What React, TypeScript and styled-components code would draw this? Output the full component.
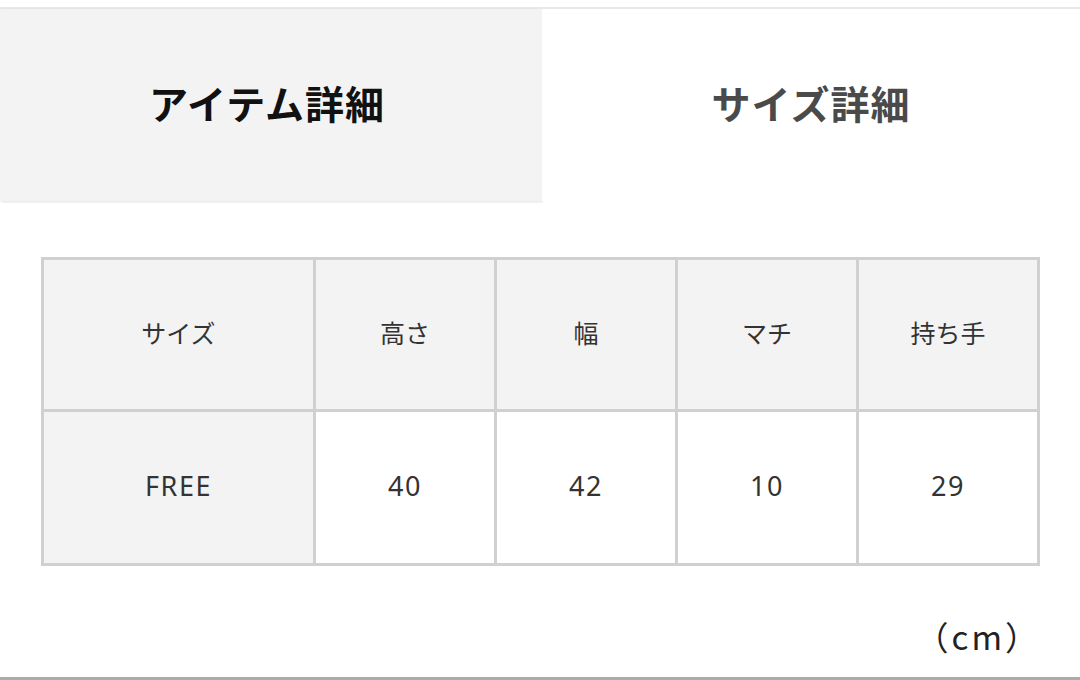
import { FC } from "react"
import styled, { createGlobalStyle } from "styled-components"

const GlobalStyle = createGlobalStyle`
  html, body {
    margin: 0;
    padding: 0;
    background: #fff;
  }
  body {
    font-family: "Noto Sans CJK JP", "Noto Sans", sans-serif;
    color: #333;
  }
`

const Page = styled.div`
  width: 1080px;
  height: 680px;
  box-sizing: border-box;
  padding-top: 7px;
  display: flex;
  flex-direction: column;
  border-bottom: 3px solid #ababab;
  overflow: hidden;
`

const TabBar = styled.div`
  display: grid;
  grid-template-columns: 542px 1fr;
  height: 194px;
  border-top: 2px solid #e8e8e8;
`

const Tab = styled.div<{ $active: boolean }>`
  display: flex;
  align-items: center;
  justify-content: center;
  box-sizing: border-box;
  padding-bottom: 6px;
  padding-right: ${({ $active }) => ($active ? "8px" : "0")};
  font-size: 39px;
  font-weight: 700;
  letter-spacing: 1px;
  color: ${({ $active }) => ($active ? "#111" : "#4a4a4a")};
  background: ${({ $active }) => ($active ? "#f3f3f3" : "#fff")};
  box-shadow: ${({ $active }) =>
    $active ? "1px 1px 2px rgba(0, 0, 0, 0.12)" : "none"};
  height: 192px;
`

const Content = styled.div`
  padding: 54px 41px 0 41px;
  display: flex;
  flex-direction: column;
`

const Table = styled.table`
  width: 996px;
  border-collapse: collapse;
  table-layout: fixed;
`

const Cell = styled.td<{ $shaded: boolean }>`
  border: 3px solid #d0d0d0;
  background: ${({ $shaded }) => ($shaded ? "#f3f3f3" : "#fff")};
  text-align: center;
  vertical-align: middle;
  font-size: 25px;
  color: #333;
  padding: 0 0 5px 0;
`

const HeaderRow = styled.tr`
  height: 152px;
`

const DataRow = styled.tr`
  height: 154px;
`

const Number = styled.span`
  font-family: "Noto Sans", "Noto Sans CJK JP", sans-serif;
  font-size: 27px;
  letter-spacing: 1.6px;
`

const Unit = styled.div`
  margin-top: 46px;
  margin-right: -2px;
  text-align: right;
  font-size: 33px;
  letter-spacing: 3px;
  color: #222;
`

const headers = ["サイズ", "高さ", "幅", "マチ", "持ち手"]
const values = ["FREE", "40", "42", "10", "29"]
const widths = [272, 181, 181, 181, 181]

const App: FC = () => {
  return (
    <>
      <GlobalStyle />
      <Page>
        <TabBar>
          <Tab $active>アイテム詳細</Tab>
          <Tab $active={false}>サイズ詳細</Tab>
        </TabBar>
        <Content>
          <Table>
            <colgroup>
              {widths.map((w, i) => (
                <col key={i} style={{ width: w }} />
              ))}
            </colgroup>
            <tbody>
              <HeaderRow>
                {headers.map((h) => (
                  <Cell key={h} $shaded>
                    {h}
                  </Cell>
                ))}
              </HeaderRow>
              <DataRow>
                {values.map((v, i) => (
                  <Cell key={i} $shaded={i === 0}>
                    <Number>{v}</Number>
                  </Cell>
                ))}
              </DataRow>
            </tbody>
          </Table>
          <Unit>（cm）</Unit>
        </Content>
      </Page>
    </>
  )
}

export default App
